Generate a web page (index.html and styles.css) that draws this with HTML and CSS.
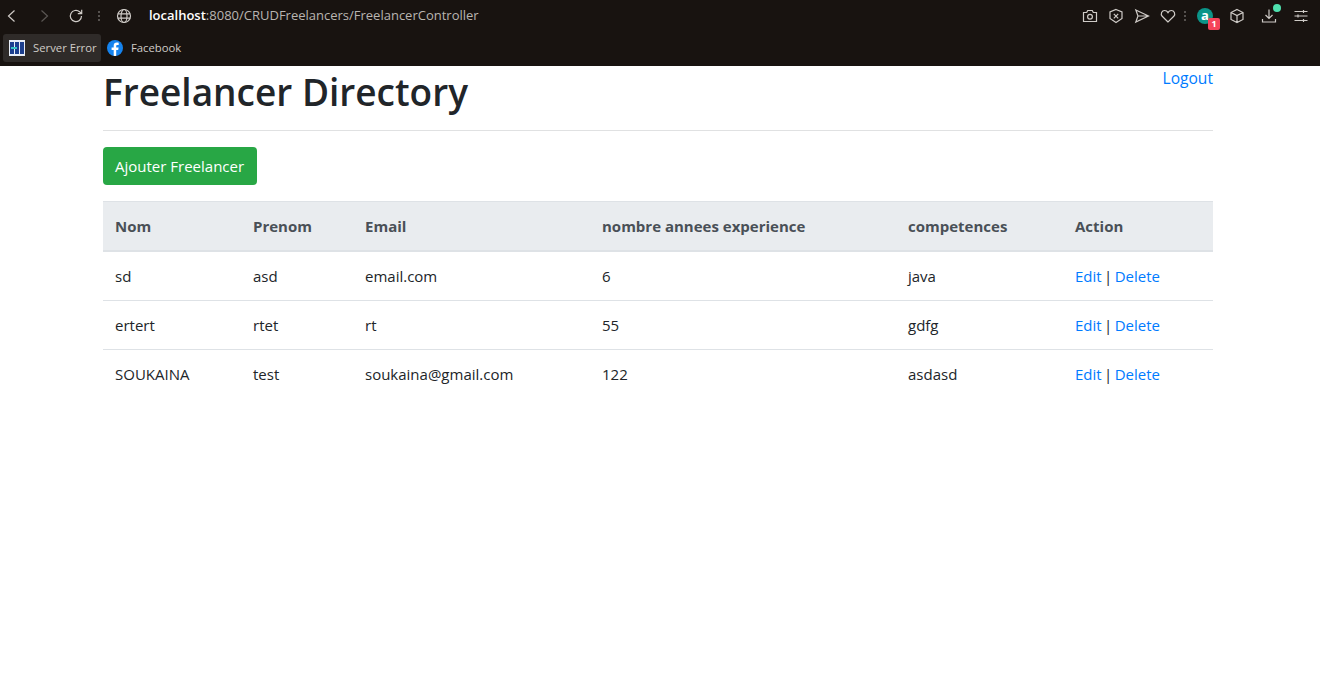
FILE: index.html
```html
<!DOCTYPE html>
<html lang="en">
<head>
    <meta charset="UTF-8">
    <meta name="viewport" content="width=device-width, initial-scale=1.0">
    <title>Freelancer Directory</title>
    <link rel="stylesheet" href="styles.css">
</head>
<body>
<div class="browser">
    <div class="toolbar">
        <svg class="icon nav-back" viewBox="0 0 16 16"><path d="M10.500 2.500 4.500 8l6 5.500"/></svg>
        <svg class="icon nav-forward" viewBox="0 0 16 16"><path d="M5.500 2.500 11.500 8l-6 5.500"/></svg>
        <svg class="icon nav-reload" viewBox="0 0 16 16"><path d="M13.500 8A5.600 5.600 0 1 1 11.600 3.800L13.500 5.500M13.700 1.800v3.900H9.800"/></svg>
        <span class="dots"></span>
        <svg class="icon nav-globe" viewBox="0 0 16 16"><circle cx="8" cy="8" r="6.500"/><ellipse cx="8" cy="8" rx="3" ry="6.500"/><path d="M1.800 5.800h12.400M1.800 10.200h12.400"/></svg>
        <div class="url"><b>localhost</b>:8080/CRUDFreelancers/FreelancerController</div>
        <div class="tools">
            <svg class="icon tool-camera" viewBox="0 0 16 16"><path d="M1.500 4.500h3.200l1-2h4.600l1 2h3.200v9h-13z"/><circle cx="8" cy="8.700" r="2.400"/></svg>
            <svg class="icon tool-shield" viewBox="0 0 16 16"><path d="M8 1.500 14 4v6.500l-6 4-6-4V4z"/><path d="m5.800 5.800 4.400 4.600M10.200 5.800l-4.400 4.600"/></svg>
            <svg class="icon tool-send" viewBox="0 0 16 16"><path d="M1.800 2 14.500 8 1.800 14 4 8zM4 8h10.500"/></svg>
            <svg class="icon tool-heart" viewBox="0 0 16 16"><path d="M8 14 2.200 8.300C.2 5.800 1.800 2.500 4.600 2.500 6 2.500 7.300 3.300 8 4.600 8.700 3.300 10 2.500 11.400 2.500c2.800 0 4.400 3.300 2.400 5.800z"/></svg>
            <span class="dots dim"></span>
            <div class="ext">
                <span class="ext-logo">a</span>
                <span class="ext-badge">1</span>
            </div>
            <svg class="icon tool-box" viewBox="0 0 16 16"><path d="M8 1.500 14 4.500v7l-6 3-6-3v-7zM2 4.500l6 3 6-3M8 7.500v7"/></svg>
            <div class="download">
                <svg class="icon tool-download" viewBox="0 0 16 16"><path d="M8 1.500v9M4.500 7 8 10.500 11.500 7M1.500 11v3h13v-3"/></svg>
                <span class="download-dot"></span>
            </div>
            <svg class="icon tool-menu" viewBox="0 0 16 16"><path d="M1.500 3.500h13M1.500 8h13M1.500 12.500h13M10.500 2v3M5 6.500v3M10.500 11v3"/></svg>
        </div>
    </div>
    <div class="bookmarks">
        <div class="bookmark active">
            <svg class="favicon" viewBox="0 0 16 16">
                <rect width="16" height="16" fill="#e8eef8"/>
                <rect x="1" y="2" width="4" height="12" fill="#1c3f8f"/>
                <rect x="6" y="2" width="4" height="12" fill="#1c3f8f"/>
                <rect x="11" y="2" width="4" height="12" fill="#1c3f8f"/>
                <rect x="2" y="7" width="6" height="2" fill="#35c4c4"/>
            </svg>
            <span>Server Error</span>
        </div>
        <div class="bookmark">
            <svg class="favicon" viewBox="0 0 16 16">
                <circle cx="8" cy="8" r="8" fill="#1583ee"/>
                <path fill="#fff" d="M9.200 16V9.900h2l.4-2.400H9.200V6.100c0-.8.300-1.200 1.200-1.200h1.300V2.800c-.5-.1-1.200-.2-1.900-.2-2 0-3.100 1.200-3.100 3.200v1.700H4.600v2.400h2.100V16z"/>
            </svg>
            <span>Facebook</span>
        </div>
    </div>
</div>

<div class="container">
    <div class="page-head">
        <h1>Freelancer Directory</h1>
        <a href="#" class="logout">Logout</a>
    </div>
    <hr>
    <a href="#" class="btn-add">Ajouter Freelancer</a>
    <table>
        <colgroup>
            <col class="col-nom">
            <col class="col-prenom">
            <col class="col-email">
            <col class="col-exp">
            <col class="col-comp">
            <col class="col-action">
        </colgroup>
        <thead>
        <tr>
            <th>Nom</th>
            <th>Prenom</th>
            <th>Email</th>
            <th>nombre annees experience</th>
            <th>competences</th>
            <th>Action</th>
        </tr>
        </thead>
        <tbody>
        <tr>
            <td>sd</td>
            <td>asd</td>
            <td>email.com</td>
            <td>6</td>
            <td>java</td>
            <td class="actions"><a href="#">Edit</a> | <a href="#">Delete</a></td>
        </tr>
        <tr>
            <td>ertert</td>
            <td>rtet</td>
            <td>rt</td>
            <td>55</td>
            <td>gdfg</td>
            <td class="actions"><a href="#">Edit</a> | <a href="#">Delete</a></td>
        </tr>
        <tr>
            <td>SOUKAINA</td>
            <td>test</td>
            <td>soukaina@gmail.com</td>
            <td>122</td>
            <td>asdasd</td>
            <td class="actions"><a href="#">Edit</a> | <a href="#">Delete</a></td>
        </tr>
        </tbody>
    </table>
</div>
</body>
</html>
```

FILE: styles.css
```css
body {
    margin: 0;
    font-family: "Open Sans", "Noto Sans", sans-serif;
    font-size: 15px;
    line-height: 24px;
    color: #212529;
    background-color: #fff;
}

a {
    color: #007bff;
    text-decoration: none;
}

/* browser chrome */
.browser {
    height: 66px;
    background-color: #181310;
    color: #d8d4d0;
}

.toolbar {
    display: flex;
    align-items: center;
    height: 31px;
    padding-left: 4px;
}

.icon {
    width: 16px;
    height: 16px;
    flex: none;
    fill: none;
    stroke: #cfcbc7;
    stroke-width: 1.2;
}

.nav-forward {
    margin-left: 16px;
    stroke: #5a5653;
}

.nav-reload {
    margin-left: 16px;
}

.dots {
    width: 2px;
    height: 12px;
    margin-left: 14px;
    background-image: radial-gradient(circle, #55514e 1px, transparent 1px);
    background-size: 2px 4px;
}

.dots.dim {
    margin-left: -2px;
}

.nav-globe {
    margin-left: 16px;
}

.url {
    margin-left: 17px;
    padding-bottom: 2px;
    font-size: 13px;
    line-height: 16px;
    color: #b9b5b1;
    white-space: nowrap;
}

.url b {
    font-weight: 600;
    color: #fff;
}

.tools {
    display: flex;
    align-items: center;
    gap: 10px;
    margin-left: auto;
    padding-right: 11px;
}

.ext {
    position: relative;
    width: 16px;
    height: 16px;
    margin-left: 1px;
}

.ext-logo {
    display: block;
    width: 16px;
    height: 16px;
    border-radius: 50%;
    background-color: #0b9488;
    color: #fff;
    font-size: 13px;
    font-weight: 700;
    line-height: 15px;
    text-align: center;
}

.ext-badge {
    position: absolute;
    left: 11px;
    top: 10px;
    width: 12px;
    height: 12px;
    border-radius: 2px;
    background-color: #f5445a;
    color: #fff;
    font-size: 9px;
    font-weight: 700;
    line-height: 12px;
    text-align: center;
}

.tool-box {
    margin-left: 6px;
}

.download {
    position: relative;
    width: 16px;
    height: 16px;
    margin-left: 6px;
}

.tool-download {
    display: block;
}

.download-dot {
    position: absolute;
    left: 12px;
    top: -4px;
    width: 8px;
    height: 8px;
    border-radius: 50%;
    background-color: #4fe0ae;
}

.tool-menu {
    margin-left: 6px;
}

.bookmarks {
    display: flex;
    align-items: center;
    height: 28px;
    margin-top: 3px;
    padding-left: 3px;
    font-size: 11.3px;
    line-height: 16px;
    color: #cfcbc7;
    white-space: nowrap;
}

.bookmark {
    display: flex;
    align-items: center;
    gap: 8px;
    height: 28px;
    padding: 0 6px;
    border-radius: 3px;
}

.bookmark.active {
    width: 98px;
    box-sizing: border-box;
    background-color: #2f2b29;
}

.favicon {
    width: 16px;
    height: 16px;
    flex: none;
}

/* page */
.container {
    width: 1110px;
    margin-left: 103px;
}

.page-head {
    display: flex;
    justify-content: space-between;
    align-items: flex-start;
    height: 64px;
}

h1 {
    margin: 2px 0 0;
    font-size: 37px;
    font-weight: 600;
    line-height: 48px;
}

.logout {
    font-size: 15.6px;
}

hr {
    height: 1px;
    margin: 0 0 16px;
    border: 0;
    background-color: #e0e1e2;
}

.btn-add {
    display: inline-block;
    padding: 7px 13px 7px 12px;
    border-radius: 4px;
    background-color: #28a745;
    color: #fff;
}

table {
    width: 100%;
    margin-top: 16px;
    border-collapse: collapse;
    table-layout: fixed;
}

.col-nom { width: 138px; }
.col-prenom { width: 112px; }
.col-email { width: 237px; }
.col-exp { width: 306px; }
.col-comp { width: 167px; }
.col-action { width: 150px; }

th, td {
    padding: 12px;
    border-top: 1px solid #dee2e6;
    text-align: left;
    white-space: nowrap;
}

th {
    border-bottom: 2px solid #dee2e6;
    background-color: #e9ecef;
    color: #495057;
    font-weight: 700;
}

.actions {
    word-spacing: -1.5px;
}
```
